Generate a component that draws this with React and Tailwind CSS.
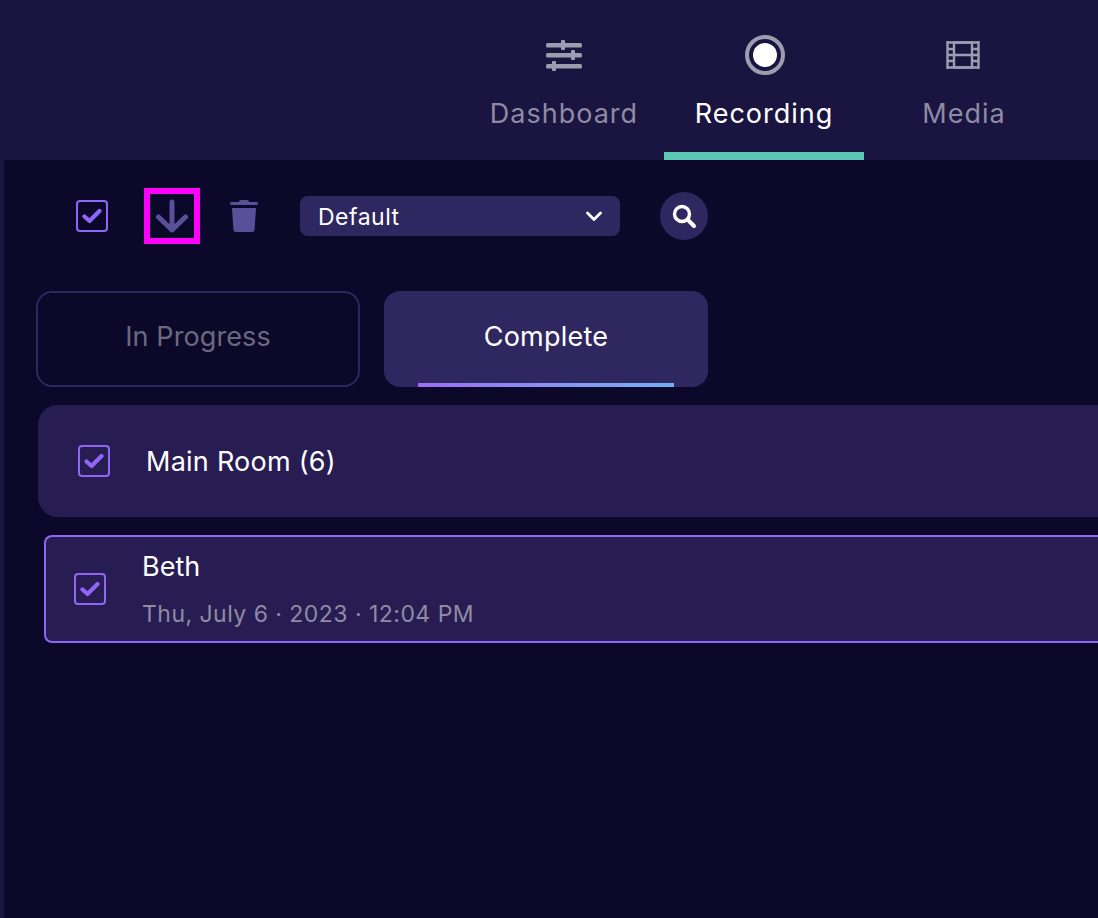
function CheckBox({ className = "" }) {
  return (
    <div className={`flex h-8 w-8 shrink-0 items-center justify-center rounded-[4px] border-2 border-[#8f66f5] ${className}`}>
      <svg width="20" height="16" viewBox="0 0 20 16" fill="none">
        <path d="M2.5 8.5 L7.5 13 L17.5 3" stroke="#8f66f5" strokeWidth="4.2" strokeLinecap="round" strokeLinejoin="round" />
      </svg>
    </div>
  );
}

function SlidersIcon() {
  return (
    <svg width="36" height="32" viewBox="0 0 36 32" fill="#a09cb0">
      <rect x="0" y="4" width="36" height="4.5" rx="1.5" />
      <rect x="15" y="1" width="4" height="10" rx="1" />
      <rect x="0" y="14" width="36" height="4.5" rx="1.5" />
      <rect x="25" y="11" width="4" height="10" rx="1" />
      <rect x="0" y="25" width="36" height="4.5" rx="1.5" />
      <rect x="6" y="22" width="4" height="10" rx="1" />
    </svg>
  );
}

function FilmIcon() {
  return (
    <svg className="-ml-0.5" width="34" height="28" viewBox="0 0 34 28" fill="none" stroke="#a09cb0" strokeWidth="2.4">
      <path d="M1.5 0 V28 M32.5 0 V28 M1.5 1.5 H32.5 M1.5 26.5 H32.5" />
      <rect x="8" y="1.5" width="18" height="25" />
      <path d="M8 14 H26 M1.5 8 H8 M1.5 14 H8 M1.5 20 H8 M26 8 H32.5 M26 14 H32.5 M26 20 H32.5" />
    </svg>
  );
}

function NavItem({ label, icon, active }) {
  return (
    <div className={`flex h-40 w-[200px] flex-col items-center border-b-8 pt-[35px] ${active ? "border-[#5ac8b4]" : "border-transparent"}`}>
      <div className="flex h-10 items-center justify-center">{icon}</div>
      <span className={`mt-[21px] text-[27px] leading-[36px] tracking-[1px] ${active ? "text-white" : "text-[#8f8ba3]"}`}>
        {label}
      </span>
    </div>
  );
}

export default function App() {
  return (
    <div className="flex h-[918px] w-[1098px] flex-col overflow-hidden bg-[#191540] font-['Inter',sans-serif]">
      <header className="flex h-40 shrink-0 justify-end pr-[34px]">
        <NavItem label="Dashboard" icon={<SlidersIcon />} />
        <NavItem
          label="Recording"
          active
          icon={
            <div className="ml-0.5 flex h-10 w-10 items-center justify-center rounded-full border-[4px] border-[#a09cb0]">
              <div className="h-6 w-6 rounded-full bg-white" />
            </div>
          }
        />
        <NavItem label="Media" icon={<FilmIcon />} />
      </header>

      <main className="ml-1 flex-1 bg-[#0b0829] pt-7">
        <div className="flex h-14 items-center">
          <CheckBox className="ml-[72px]" />
          <button className="ml-9 flex h-14 w-14 items-center justify-center border-[6px] border-[#ff00ff]">
            <svg width="36" height="34" viewBox="0 0 36 34" fill="none" stroke="#5a5099" strokeWidth="5" strokeLinecap="round" strokeLinejoin="round">
              <path d="M18 3 V31 M4.5 18 L18 31 L31.5 18" />
            </svg>
          </button>
          <svg className="ml-[30px]" width="28" height="34" viewBox="0 0 28 34" fill="#5a5099">
            <path d="M9 3 Q9 1 11 1 H17 Q19 1 19 3 H26.5 Q28 3 28 4.5 Q28 6 26.5 6 H1.5 Q0 6 0 4.5 Q0 3 1.5 3 Z" />
            <path d="M2 9 H26 L24.6 30.5 Q24.4 33 22 33 H6 Q3.6 33 3.4 30.5 Z" />
          </svg>
          <div className="ml-[42px] flex h-10 w-80 items-center justify-between rounded-lg bg-[#2f2760] px-[18px]">
            <span className="pt-0.5 text-[23px] tracking-[0.5px] text-white">Default</span>
            <svg width="16" height="11" viewBox="0 0 16 11" fill="none" stroke="#ffffff" strokeWidth="2.8" strokeLinecap="round" strokeLinejoin="round">
              <path d="M1.5 2 L8 8.5 L14.5 2" />
            </svg>
          </div>
          <div className="ml-10 flex h-12 w-12 items-center justify-center rounded-full bg-[#2f2760]">
            <svg width="26" height="26" viewBox="0 0 26 26" fill="none" stroke="#ffffff" strokeLinecap="round">
              <circle cx="11" cy="11" r="7.5" strokeWidth="3.4" />
              <path d="M17 17 L23 23" strokeWidth="4" />
            </svg>
          </div>
        </div>

        <div className="ml-8 mt-[47px] flex gap-6">
          <div className="flex h-24 w-[324px] items-center justify-center rounded-2xl border-2 border-[#2f2760] pb-[3px]">
            <span className="text-[27px] tracking-[0.1px] text-[#6b6880]">In Progress</span>
          </div>
          <div className="relative flex h-24 w-[324px] items-center justify-center rounded-2xl bg-[#2f2760] pb-[3px]">
            <span className="text-[27px] tracking-[0.25px] text-white">Complete</span>
            <div className="absolute bottom-0 left-[34px] h-1 w-64 bg-gradient-to-r from-[#9b6cf5] to-[#6fb0f2]" />
          </div>
        </div>

        <div className="ml-[34px] mt-[18px] flex h-28 items-center rounded-l-[20px] bg-[#281d53] pl-10">
          <CheckBox />
          <span className="ml-[36px] pt-0.5 text-[27px] tracking-[0.25px] text-white">Main Room (6)</span>
        </div>

        <div className="ml-10 mt-[18px] flex h-[108px] items-center rounded-l-lg border-2 border-r-0 border-[#8f66f5] bg-[#281d53] pl-[28px]">
          <CheckBox />
          <div className="ml-[36px] flex flex-col pt-0.5">
            <span className="pt-px text-[27px] leading-[32px] text-white">Beth</span>
            <span className="mt-[15px] text-[23px] leading-[32px] tracking-[0.47px] text-[#8f8ba3]">Thu, July 6 · 2023 · 12:04 PM</span>
          </div>
        </div>
      </main>
    </div>
  );
}
